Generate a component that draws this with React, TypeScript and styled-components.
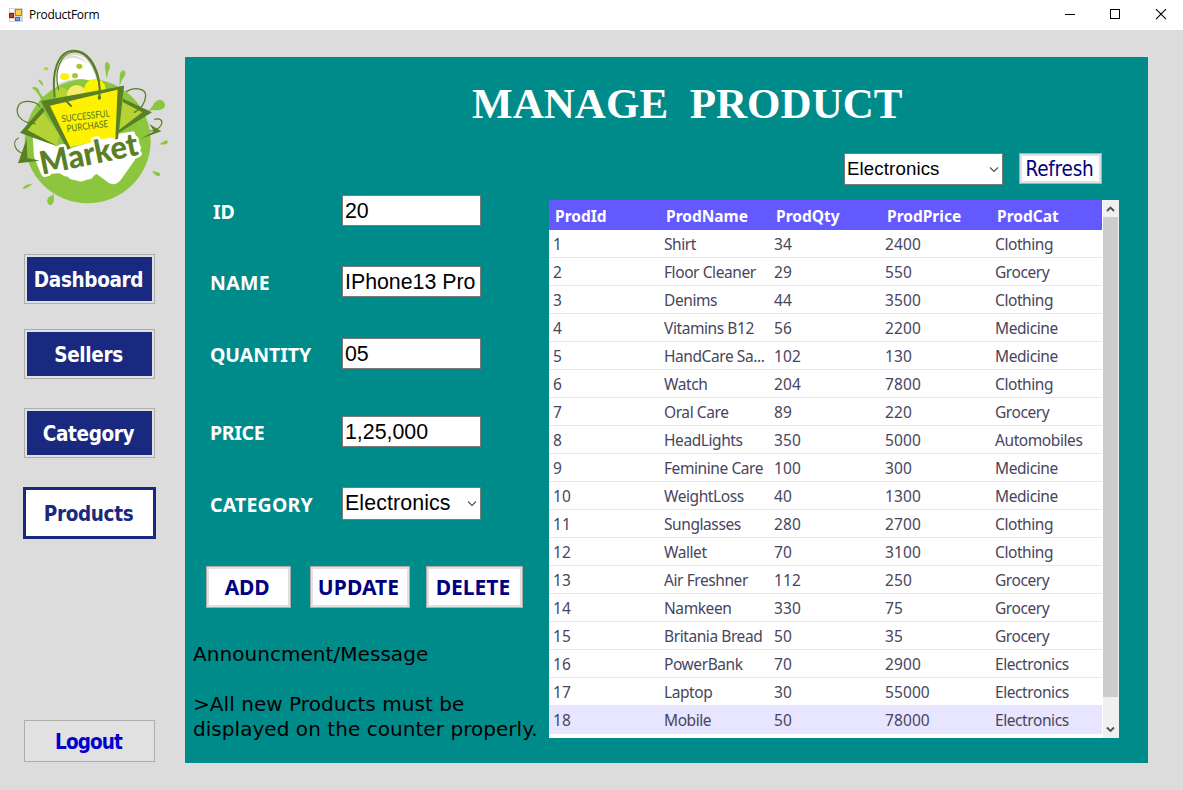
import React from 'react';
import styled, { createGlobalStyle } from 'styled-components';

const Global = createGlobalStyle`
  * { box-sizing: border-box; }
  body { margin: 0; overflow: hidden; font-family: "Noto Sans", sans-serif; }
  button, input { margin: 0; font: inherit; }
`;

const Window = styled.div`
  width: 1183px;
  height: 790px;
  display: flex;
  flex-direction: column;
  background: #dcdcdc;
`;

const TitleBar = styled.header`
  height: 30px;
  flex: none;
  display: flex;
  align-items: center;
  background: #fff;
  padding-left: 9px;
  font-family: "Open Sans", sans-serif;
  font-size: 12px;
  letter-spacing: -0.3px;
  color: #000;
`;

const AppTitle = styled.span`
  margin: -1px 0 0 6px;
  flex: 1;
`;

const Body = styled.div`
  flex: 1;
  display: flex;
`;

const Sidebar = styled.nav`
  width: 185px;
  display: flex;
  flex-direction: column;
  align-items: flex-start;
`;

const NavButton = styled.button<{ $top: number }>`
  width: 131px;
  height: 50px;
  flex: none;
  margin: ${(p) => p.$top}px 0 0 24px;
  padding: 1px 2px 0 0;
  border: 1px solid #adadad;
  box-shadow: inset 0 0 0 2px #e1e1e1;
  background: #1a2980;
  color: #fff;
  font: bold 20.5px "DejaVu Sans Condensed", "DejaVu Sans", sans-serif;
  font-stretch: condensed;
  letter-spacing: -0.35px;
  white-space: nowrap;
`;

const ActiveNavButton = styled(NavButton)`
  width: 133px;
  height: 52px;
  margin-left: 23px;
  border: 3px solid #1a2980;
  box-shadow: none;
  background: #fff;
  color: #1a2980;
`;

const LogoutButton = styled(NavButton)`
  height: 42px;
  box-shadow: none;
  background: #e1e1e1;
  color: #0000cd;
  letter-spacing: -0.9px;
`;

const Panel = styled.main`
  width: 963px;
  height: 706px;
  margin-top: 27px;
  background: #008b8b;
  display: flex;
  flex-direction: column;
`;

const Heading = styled.h1`
  margin: 22px 0 0 287px;
  height: 50px;
  font: bold 43px/50px "Liberation Serif", serif;
  letter-spacing: 0.04px;
  color: #fff;
  white-space: pre;
`;

const Columns = styled.div`
  display: flex;
  flex: 1;
`;

const FormColumn = styled.section`
  width: 364px;
  padding-top: 66px;
`;

const Field = styled.div<{ $gap: number; $indent?: number; $height?: number }>`
  display: flex;
  align-items: center;
  height: ${(p) => p.$height ?? 31}px;
  padding-left: ${(p) => p.$indent ?? 25}px;
  margin-bottom: ${(p) => p.$gap}px;
`;

const FieldLabel = styled.label<{ $indent?: number; $track: number }>`
  width: ${(p) => 157 - (p.$indent ?? 25)}px;
  padding-top: 2px;
  font: bold 19.5px/26px "Noto Sans", sans-serif;
  letter-spacing: ${(p) => p.$track}px;
  color: #fff;
`;

const TextBox = styled.input`
  width: 139px;
  height: 31px;
  padding: 2px 2px 0;
  border: 1px solid #7a7a7a;
  border-radius: 0;
  background: #fff;
  color: #000;
  font: 21.33px "Liberation Sans", sans-serif;
`;

const Combo = styled.div<{ $width: number; $height: number; $size: number }>`
  width: ${(p) => p.$width}px;
  height: ${(p) => p.$height}px;
  flex: none;
  display: flex;
  align-items: center;
  justify-content: space-between;
  padding: 0 3px 1px 2px;
  border: 1px solid #7a7a7a;
  background: #fff;
  color: #000;
  font: ${(p) => p.$size}px "Liberation Sans", sans-serif;
  letter-spacing: 0.12px;
`;

const Actions = styled.div`
  display: flex;
  margin: 46px 0 0 21px;
`;

const ActionButton = styled.button<{ $width: number; $track: number; $after?: number }>`
  width: ${(p) => p.$width}px;
  height: 42px;
  margin-right: ${(p) => p.$after ?? 0}px;
  padding: 0 3px 0 0;
  border: 1px solid #adadad;
  box-shadow: inset 0 0 0 2px #e1e1e1;
  background: #fff;
  color: #000080;
  font: bold 21px "Noto Sans", sans-serif;
  letter-spacing: ${(p) => p.$track}px;
  white-space: nowrap;
`;

const Message = styled.p`
  margin: 34px 0 0 8px;
  font: 20px/25px "DejaVu Sans", sans-serif;
  letter-spacing: 0.05px;
  color: #000;
  white-space: pre;
`;

const ListColumn = styled.section`
  width: 570px;
`;

const Filters = styled.div`
  display: flex;
  margin: 24px 0 0 295px;
`;

const RefreshButton = styled.button`
  width: 83px;
  height: 31px;
  margin-left: 16px;
  padding: 0 2px 0 0;
  border: 1px solid #adadad;
  box-shadow: inset 0 0 0 2px #e1e1e1;
  background: #fff;
  color: #000080;
  font: 20.5px "DejaVu Sans Condensed", "DejaVu Sans", sans-serif;
  font-stretch: condensed;
  letter-spacing: -0.2px;
`;

const Grid = styled.div`
  display: flex;
  height: 538px;
  margin-top: 15px;
  background: #fff;
`;

const Table = styled.div`
  width: 553px;
`;

const Row = styled.div<{ $selected?: boolean }>`
  height: 28px;
  display: grid;
  grid-template-columns: 111px 110px 111px 110px 111px;
  border-bottom: 1px solid #e7e5ff;
  background: ${(p) => (p.$selected ? '#e7e5ff' : '#fff')};
`;

const HeadRow = styled(Row)`
  height: 30px;
  border: 0;
  background: #6458ff;
`;

const Cell = styled.span<{ $numeric?: boolean }>`
  padding-left: 4px;
  font: 15.5px/28px "Noto Sans", sans-serif;
  letter-spacing: ${(p) => (p.$numeric ? 0.1 : -0.42)}px;
  color: #47455e;
  white-space: nowrap;
`;

const HeadCell = styled.span`
  padding: 2px 0 0 6px;
  font: bold 15.5px/28px "Noto Sans", sans-serif;
  color: #fff;
`;

const Scrollbar = styled.div`
  width: 16px;
  margin-left: 1px;
  display: flex;
  flex-direction: column;
  align-items: center;
  background: #f0f0f0;
`;

const ScrollButton = styled.div`
  height: 17px;
  display: flex;
  align-items: center;
  padding-right: 1px;
`;

const Thumb = styled.div`
  width: 15px;
  height: 480px;
  margin: 0 1px 24px 0;
  background: #cdcdcd;
`;

const products = [
  ['Shirt', '34', '2400', 'Clothing'],
  ['Floor Cleaner', '29', '550', 'Grocery'],
  ['Denims', '44', '3500', 'Clothing'],
  ['Vitamins B12', '56', '2200', 'Medicine'],
  ['HandCare Sa...', '102', '130', 'Medicine'],
  ['Watch', '204', '7800', 'Clothing'],
  ['Oral Care', '89', '220', 'Grocery'],
  ['HeadLights', '350', '5000', 'Automobiles'],
  ['Feminine Care', '100', '300', 'Medicine'],
  ['WeightLoss', '40', '1300', 'Medicine'],
  ['Sunglasses', '280', '2700', 'Clothing'],
  ['Wallet', '70', '3100', 'Clothing'],
  ['Air Freshner', '112', '250', 'Grocery'],
  ['Namkeen', '330', '75', 'Grocery'],
  ['Britania Bread', '50', '35', 'Grocery'],
  ['PowerBank', '70', '2900', 'Electronics'],
  ['Laptop', '30', '55000', 'Electronics'],
  ['Mobile', '50', '78000', 'Electronics'],
];

const FormIcon = () => (
  <svg width="14" height="14" viewBox="0 0 14 14">
    <rect x="0" y="0" width="14" height="14" fill="#d5d5d5" />
    <rect x="1" y="1" width="4" height="3" fill="#fff" />
    <rect x="1" y="11" width="4" height="2" fill="#fff" />
    <rect x="0.5" y="5.5" width="4" height="4" fill="#d8321f" stroke="#971a10" />
    <rect x="6.5" y="1.5" width="6" height="6" fill="#ffcf45" stroke="#b98412" />
    <rect x="6.5" y="9.5" width="4" height="3" fill="#6ea4f4" stroke="#3668c4" />
  </svg>
);

const WindowControls = () => (
  <svg width="128" height="30" viewBox="1055 0 128 30" fill="none" stroke="#000">
    <path d="M1065 14.5h10" />
    <rect x="1110.5" y="9.5" width="9" height="9" />
    <path d="M1156 9.2l10 10M1166 9.2l-10 10" strokeWidth="1.15" />
  </svg>
);

const DropArrow = () => (
  <svg width="11" height="8" viewBox="0 0 11 8" fill="none" stroke="#505050" strokeWidth="1.1">
    <path d="M2 2.5L6 6.5L10 2.5" />
  </svg>
);

const Chevron = ({ up }: { up?: boolean }) => (
  <svg width="9" height="7" viewBox="0 0 9 7" fill="none" stroke="#505050" strokeWidth="1.9">
    <path d={up ? 'M1 6L4.5 2.5L8 6' : 'M1 1.5L4.5 5L8 1.5'} />
  </svg>
);

const MarketLogo = () => (
  <svg width="185" height="190" viewBox="0 90 555 570">
    <g fill="#8cc63f">
      <ellipse cx="263" cy="423" rx="189" ry="187" />
      <path d="M151 616c-14-4-11-24 0-27 6-2 8-4 10-9 0 14 3 22-2 30-3 4-5 6-8 6z" />
      <path d="M69 566c2-11 15-12 31-16-12 8-19 17-31 16z" />
      <path d="M457 513c14 3 25 4 23 12-3 8-17 2-23-12z" />
      <path d="M477 433c12-5 18-15 25-11 5 8-4 14-25 11z" />
      <path d="M440 334c20-7 19-35 40-35 18 2 21 26 2 30-17 4-27-1-42 5z" />
      <path d="M320 236c-1-18-11-42-1-50 12 1 13 15 7 27-4 9-3 15-6 23z" />
      <path d="M358 259c3-18-4-41 11-48 11 2 8 16 1 23-7 8-7 16-12 25z" />
      <path d="M95 263c13-5 21 2 24 13 3 10 12 16 25 24l-15 14c-8-26-18-40-34-51z" />
      <path d="M114 239c9 0 15 6 16 20-9-7-12-14-16-20z" />
    </g>
    <path d="M172 252c-2-60 26-88 58-86 38 6 56 50 61 84-34-18-80-18-119 2z" fill="#fff" />
    <path d="M186 182c21-22 58-20 76 10-24-22-52-22-76-10z" fill="#dcdcdc" />
    <ellipse cx="138" cy="206" rx="7" ry="5" fill="#b5d334" />
    <ellipse cx="238" cy="199" rx="9" ry="8" fill="#a9c92a" />
    <ellipse cx="225" cy="227" rx="9" ry="8" fill="#a9c92a" />
    <ellipse cx="194" cy="230" rx="14" ry="11" fill="#fff200" />
    <circle cx="183" cy="283" r="21" fill="#b5d334" />
    <ellipse cx="230" cy="283" rx="29" ry="28" fill="#f5ec6a" />
    <circle cx="285" cy="269" r="32" fill="#fff200" />

    <path d="M98 405l72 32 34 10 146-45 52-8 22 50-22 40-40 56q-14 18-34 10l-38-28c-14 6-10 14-22 16-14 2-18 8-32 6-12-8-24 0-32-14-14 0-18-8-28-10l-52 4-22-54z" fill="#fff" />

    <path d="M80 391l48-55 50 68-8 36q-40-24-90-49z" fill="#b5d334" />
    <path d="M60 398l68-78 6 13-52 57 90 48q-50-16-112-40z" fill="#5a8026" />
    <path d="M54 490l26-74 2 58 38 8z" fill="#5a8026" />
    <path d="M368 304l66 32-76 58z" fill="#b5d334" />
    <path d="M369 296l87 41-99 61v-8l70-53-59-31z" fill="#5a8026" />
    <path d="M448 372l36 22-62 22 40-22z" fill="#5a8026" />

    <path d="M140 308l220-44-14 152c-28-6-34 4-52 2-26 16-54 14-90 26z" fill="#fff200" />
    <path d="M122 303l250-46-3 14-17-2-202 48 62 128-9 4z" fill="#5a8026" />
    <path d="M353 262l19-5-18 160-8 2z" fill="#5a8026" />

    <g fill="none" stroke="#5a8026" strokeLinecap="round">
      <path d="M164 290c-10-75 10-135 54-138 54-2 87 67 80 141" strokeWidth="6" />
      <path d="M176 270c-16-60 7-110 45-114 38-3 67 42 79 112" strokeWidth="3.5" />
      <path d="M196 300l17 18" strokeWidth="6" />
      <path d="M298 290v5" strokeWidth="9" />
      <path d="M106 371c-44-1-65-30-49-57 11-14 45-14 63 5" strokeWidth="3.5" />
      <path d="M380 274c26-15 59-7 57 14-2 22-16 40-34 49" strokeWidth="4" />
      <path d="M80 463c-37-5-46-38-25-49" strokeWidth="3.5" />
      <path d="M464 358c18-5 25 5 20 16-8 14-20 19-35 19" strokeWidth="3.5" />
    </g>
    <g fill="#5a8026" fontFamily="Lato, sans-serif" fontSize="29" fontWeight="500">
      <text x="186" y="367" textLength="145" lengthAdjust="spacingAndGlyphs" transform="rotate(-7 186 367)">SUCCESSFUL</text>
      <text x="201" y="396" textLength="125" lengthAdjust="spacingAndGlyphs" transform="rotate(-7 201 396)">PURCHASE</text>
    </g>
    <text
      x="126" y="524" fontFamily="Lato, sans-serif" fontSize="96" fontWeight="900"
      textLength="299" lengthAdjust="spacingAndGlyphs" transform="rotate(-11.5 126 524)"
      fill="#5a8026" stroke="#fff" strokeWidth="16" strokeLinejoin="round" paintOrder="stroke"
    >Market</text>
  </svg>
);

export default function App() {
  return (
    <Window>
      <Global />
      <TitleBar>
        <FormIcon />
        <AppTitle>ProductForm</AppTitle>
        <WindowControls />
      </TitleBar>
      <Body>
        <Sidebar>
          <MarketLogo />
          <NavButton $top={34}>Dashboard</NavButton>
          <NavButton $top={25}>Sellers</NavButton>
          <NavButton $top={29}>Category</NavButton>
          <ActiveNavButton $top={29}>Products</ActiveNavButton>
          <LogoutButton $top={181}>Logout</LogoutButton>
        </Sidebar>
        <Panel>
          <Heading>{'MANAGE  PRODUCT'}</Heading>
          <Columns>
            <FormColumn>
              <Field $gap={40} $indent={28}>
                <FieldLabel $indent={28} $track={0}>ID</FieldLabel>
                <TextBox defaultValue="20" />
              </Field>
              <Field $gap={41}>
                <FieldLabel $track={0.3}>NAME</FieldLabel>
                <TextBox defaultValue="IPhone13 Pro" />
              </Field>
              <Field $gap={47}>
                <FieldLabel $track={-0.05}>QUANTITY</FieldLabel>
                <TextBox defaultValue="05" />
              </Field>
              <Field $gap={40}>
                <FieldLabel $track={-0.3}>PRICE</FieldLabel>
                <TextBox defaultValue="1,25,000" />
              </Field>
              <Field $gap={0} $height={33}>
                <FieldLabel $track={0.2}>CATEGORY</FieldLabel>
                <Combo $width={139} $height={33} $size={21.33}>Electronics<DropArrow /></Combo>
              </Field>
              <Actions>
                <ActionButton $width={85} $track={-0.2} $after={19}>ADD</ActionButton>
                <ActionButton $width={100} $track={0.1} $after={16}>UPDATE</ActionButton>
                <ActionButton $width={97} $track={0}>DELETE</ActionButton>
              </Actions>
              <Message>{'Announcment/Message\n\n>All new Products must be\ndisplayed on the counter properly.'}</Message>
            </FormColumn>
            <ListColumn>
              <Filters>
                <Combo $width={159} $height={32} $size={18.67}>Electronics<DropArrow /></Combo>
                <RefreshButton>Refresh</RefreshButton>
              </Filters>
              <Grid>
                <Table>
                  <HeadRow>
                    {['ProdId', 'ProdName', 'ProdQty', 'ProdPrice', 'ProdCat'].map((h) => (
                      <HeadCell key={h}>{h}</HeadCell>
                    ))}
                  </HeadRow>
                  {products.map((row, i) => (
                    <Row key={i} $selected={i === products.length - 1}>
                      <Cell $numeric>{i + 1}</Cell>
                      {row.map((value, c) => (
                        <Cell key={c} $numeric={/^\d+$/.test(value)}>{value}</Cell>
                      ))}
                    </Row>
                  ))}
                </Table>
                <Scrollbar>
                  <ScrollButton><Chevron up /></ScrollButton>
                  <Thumb />
                  <ScrollButton><Chevron /></ScrollButton>
                </Scrollbar>
              </Grid>
            </ListColumn>
          </Columns>
        </Panel>
      </Body>
    </Window>
  );
}
